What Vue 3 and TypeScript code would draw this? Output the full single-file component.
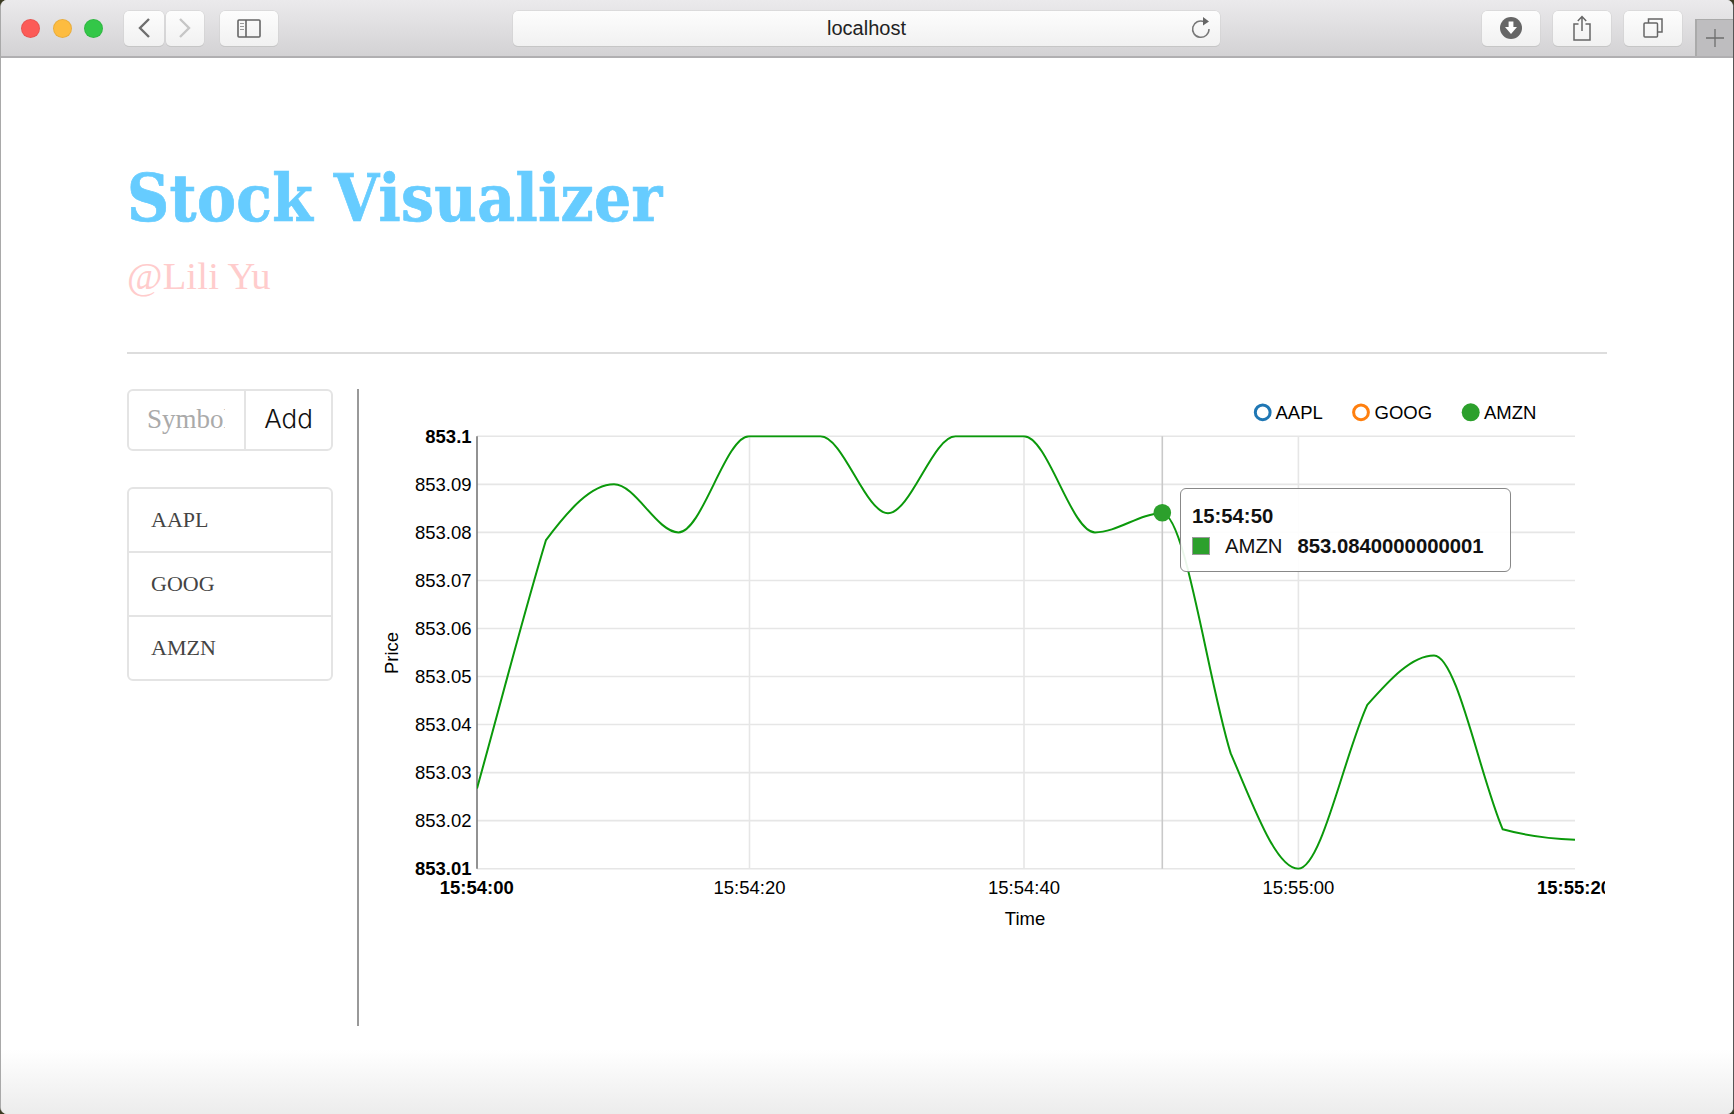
<script setup lang="ts">
import { computed } from 'vue';

const symbols = ['AAPL', 'GOOG', 'AMZN'];

// chart scale, measured from the page
const plotLeft = 477;
const plotRight = 1575;
const plotTop = 436.3;
const plotBottom = 868.7;
const yStep = (plotBottom - plotTop) / 9;

const priceToY = (p: number) => plotBottom - ((p - 853.01) / 0.01) * yStep;

const times = [477, 546, 614, 678.5, 749, 820.5, 888, 955.5, 1024, 1095, 1162.3, 1230.7, 1298.3, 1367.3, 1434, 1502.7, 1575];
const prices = [
	853.0267, 853.0784, 853.09, 853.08, 853.1, 853.1, 853.084, 853.1, 853.1,
	853.08, 853.084, 853.034, 853.01, 853.0441, 853.0544, 853.0182, 853.016,
];

// monotone curve, a knot keeps separate slopes on each side
const linePath = computed(() => {
	const ys = prices.map(priceToY);
	const n = ys.length;
	const d = ys.slice(1).map((y, i) => (y - ys[i]) / (times[i + 1] - times[i]));
	const slopeIn = ys.map(() => 0);
	const slopeOut = ys.map(() => 0);
	slopeOut[0] = d[0];
	slopeIn[n - 1] = d[n - 2] * 0.3;
	for (let i = 1; i < n - 1; i++) {
		const a = d[i - 1];
		const b = d[i];
		if (a * b <= 0) continue;
		const mean = (2 * a * b) / (a + b);
		if (Math.abs(a) > Math.abs(b)) {
			slopeIn[i] = a * 0.92;
			slopeOut[i] = mean;
		} else {
			slopeIn[i] = mean;
			slopeOut[i] = b * 0.92;
		}
	}
	let path = `M${times[0]},${ys[0]}`;
	for (let i = 1; i < n; i++) {
		const h = (times[i] - times[i - 1]) / 3;
		path += `C${times[i - 1] + h},${ys[i - 1] + slopeOut[i - 1] * h} ${times[i] - h},${ys[i] - slopeIn[i] * h} ${times[i]},${ys[i]}`;
	}
	return path;
});

const yTicks = ['853.1', '853.09', '853.08', '853.07', '853.06', '853.05', '853.04', '853.03', '853.02', '853.01'].map(
	(label, i) => ({
		label,
		y: plotTop + i * yStep,
		bold: i === 0 || i === 9,
	}),
);

const xTicks = [
	{ label: '15:54:00', x: 476.7, bold: true, grid: false },
	{ label: '15:54:20', x: 749.5, bold: false, grid: true },
	{ label: '15:54:40', x: 1024, bold: false, grid: true },
	{ label: '15:55:00', x: 1298.4, bold: false, grid: true },
	{ label: '15:55:20', x: 1574, bold: true, grid: false },
];
</script>

<template>
	<div class="window">
		<div class="toolbar">
			<span class="light red"></span>
			<span class="light yellow"></span>
			<span class="light green"></span>

			<button class="tb-btn back">
				<svg width="14" height="22" viewBox="0 0 14 22"><path d="M12 2 L3 11 L12 20" fill="none" stroke="#6e6e6e" stroke-width="2.4" /></svg>
			</button>
			<button class="tb-btn forward">
				<svg width="14" height="22" viewBox="0 0 14 22"><path d="M2 2 L11 11 L2 20" fill="none" stroke="#c6c6c6" stroke-width="2.4" /></svg>
			</button>
			<button class="tb-btn sidebar-btn">
				<svg width="24" height="19" viewBox="0 0 24 19">
					<rect x="1" y="1" width="22" height="17" rx="1" fill="none" stroke="#666" stroke-width="1.6" />
					<path d="M9 1 V18" stroke="#666" stroke-width="1.6" />
					<path d="M3 4.5 H7 M3 7.5 H7 M3 10.5 H7" stroke="#999" stroke-width="1.2" />
				</svg>
			</button>

			<div class="url">
				<span>localhost</span>
				<svg class="reload" width="22" height="24" viewBox="0 0 22 24">
					<path d="M14 5.6 A8.2 8.2 0 1 0 19 13" fill="none" stroke="#777" stroke-width="1.5" />
					<path d="M13 1 L19 5.6 L13 9.4 Z" fill="#666" />
				</svg>
			</div>

			<button class="tb-btn action download">
				<svg width="24" height="24" viewBox="0 0 24 24">
					<circle cx="12" cy="12" r="11" fill="#666" />
					<path d="M9.6 5.5 H14.4 V11 H18 L12 18 L6 11 H9.6 Z" fill="#fff" />
				</svg>
			</button>
			<button class="tb-btn action share">
				<svg width="20" height="26" viewBox="0 0 20 26">
					<path d="M6.5 9 H2 V25 H18 V9 H13.5" fill="none" stroke="#666" stroke-width="1.5" />
					<path d="M10 2 V16 M5.8 6 L10 1.6 L14.2 6" fill="none" stroke="#666" stroke-width="1.5" />
				</svg>
			</button>
			<button class="tb-btn action tabs">
				<svg width="20" height="20" viewBox="0 0 20 20">
					<rect x="1" y="5" width="13.5" height="14" rx="1" fill="none" stroke="#666" stroke-width="1.5" />
					<path d="M5.5 5 V1 H19 V14 H14.5" fill="none" stroke="#666" stroke-width="1.5" />
				</svg>
			</button>
			<div class="new-tab">
				<svg width="18" height="18" viewBox="0 0 18 18"><path d="M9 0 V18 M0 9 H18" stroke="#6e6e6e" stroke-width="1.3" /></svg>
			</div>
		</div>

		<div class="page">
			<header class="head">
				<h1>Stock Visualizer</h1>
				<p>@Lili Yu</p>
			</header>

			<div class="main">
				<aside class="side">
					<div class="add-group">
						<input type="text" placeholder="Symbol" />
						<button>Add</button>
					</div>
					<ul class="symbols">
						<li v-for="s in symbols" :key="s">{{ s }}</li>
					</ul>
				</aside>

				<div class="divider"></div>

				<div class="chart">
					<svg width="1246" height="637" viewBox="359 389 1246 637">
						<defs>
							<clipPath id="plot-clip">
								<rect :x="plotLeft" :y="plotTop - 1" :width="plotRight - plotLeft" :height="plotBottom - plotTop + 2" />
							</clipPath>
						</defs>

						<!-- grid -->
						<line v-for="t in yTicks" :key="t.label" :x1="plotLeft" :x2="plotRight" :y1="t.y" :y2="t.y" class="grid" />
						<template v-for="t in xTicks" :key="t.label">
							<line v-if="t.grid" :x1="t.x" :x2="t.x" :y1="plotTop" :y2="plotBottom" class="grid" />
						</template>
						<line x1="1162.3" x2="1162.3" :y1="plotTop" :y2="plotBottom" class="cross" />
						<line :x1="plotLeft" :x2="plotLeft" :y1="plotTop" :y2="plotBottom" class="axis" />

						<!-- tick labels -->
						<text
							v-for="t in yTicks"
							:key="t.label"
							x="471.6"
							:y="t.y + 6.3"
							text-anchor="end"
							class="tick"
							:class="{ bold: t.bold }"
						>{{ t.label }}</text>
						<text
							v-for="t in xTicks"
							:key="t.label"
							:x="t.x"
							y="894"
							text-anchor="middle"
							class="tick"
							:class="{ bold: t.bold }"
						>{{ t.label }}</text>
						<text x="1025" y="925" text-anchor="middle" class="tick">Time</text>
						<text transform="translate(398 653) rotate(-90)" text-anchor="middle" class="tick">Price</text>

						<!-- series -->
						<path :d="linePath" clip-path="url(#plot-clip)" class="series" />
						<circle cx="1162.3" cy="512.7" r="8.8" fill="#2ca02c" />

						<!-- legend -->
						<circle cx="1262.7" cy="412.3" r="7.4" class="ring" stroke="#1f77b4" />
						<text x="1275.5" y="419" class="tick">AAPL</text>
						<circle cx="1361" cy="412.3" r="7.4" class="ring" stroke="#ff7f0e" />
						<text x="1374.5" y="419" class="tick">GOOG</text>
						<circle cx="1470.7" cy="412.3" r="9" fill="#2ca02c" />
						<text x="1484" y="419" class="tick">AMZN</text>
					</svg>

					<div class="tooltip">
						<div class="tip-time">15:54:50</div>
						<div class="tip-row">
							<span class="tip-swatch"></span>
							<span class="tip-name">AMZN</span>
							<span class="tip-value">853.0840000000001</span>
						</div>
					</div>
				</div>
			</div>
		</div>
	</div>
</template>

<style>
html, body {
	margin: 0;
	background: #3b3a22;
}
</style>

<style scoped>
.window {
	position: relative;
	width: 1734px;
	height: 1114px;
	overflow: hidden;
	box-sizing: border-box;
	border-left: 1px solid #a9a9a9;
	border-right: 1px solid #555;
	border-radius: 7px;
	background: #fff;
}

/* the bottom fade of the safari window */
.window::after {
	content: '';
	position: absolute;
	left: 0;
	right: 0;
	bottom: 0;
	height: 64px;
	background: linear-gradient(rgba(238, 238, 238, 0), #ececec);
	pointer-events: none;
}

.toolbar {
	display: flex;
	align-items: center;
	box-sizing: border-box;
	height: 58px;
	padding-left: 20px;
	background: linear-gradient(#ebeaec, #d3d2d4);
	border-bottom: 2px solid #b0afb1;
}

.light {
	flex: none;
	width: 19px;
	height: 19px;
	margin-right: 12.5px;
	box-sizing: border-box;
	border-radius: 50%;
	border: 1px solid rgba(0, 0, 0, 0.08);
}
.red { background: #fc5b57; }
.yellow { background: #fdbc40; }
.green { background: #33c748; }

.tb-btn {
	flex: none;
	display: flex;
	align-items: center;
	justify-content: center;
	height: 35px;
	padding: 0;
	border: none;
	border-radius: 5px;
	background: linear-gradient(#fdfdfd, #f1f1f1);
	box-shadow: 0 0 0 0.5px #cfcfcf, 0 1px 0 #bdbdbd;
}

.back { width: 40px; margin-left: 8.5px; }
.forward { width: 38px; margin-left: 2px; }
.sidebar-btn { width: 58px; margin-left: 16px; }

.url {
	flex: none;
	position: relative;
	display: flex;
	align-items: center;
	justify-content: center;
	width: 707px;
	height: 35px;
	margin-left: 235px;
	border-radius: 5px;
	background: linear-gradient(#fdfdfd, #f1f1f1);
	box-shadow: 0 0 0 0.5px #cfcfcf, 0 1px 0 #bdbdbd;
	font-family: 'Liberation Sans', Arial, sans-serif;
	font-size: 20px;
	color: #222;
}

.reload {
	position: absolute;
	right: 8px;
	top: 5px;
}

.action { width: 58px; margin-left: 13px; }
.download { margin-left: 262px; }

.new-tab {
	flex: none;
	align-self: flex-end;
	display: flex;
	align-items: center;
	justify-content: center;
	box-sizing: border-box;
	width: 40px;
	height: 37px;
	margin-left: 13px;
	padding-right: 2px;
	background: #bebdbf;
	border-top: 1px solid #aaa;
	border-left: 2px solid #aaa;
}

.page {
	width: 1480px;
	margin-left: 126px;
}

.head {
	padding-top: 102px;
	height: 192px;
	border-bottom: 2px solid #ddd;
}

h1 {
	margin: 0;
	font-family: 'DejaVu Serif', Georgia, serif;
	font-stretch: condensed;
	font-weight: 700;
	font-size: 65px;
	line-height: 76px;
	letter-spacing: 0.35px;
	-webkit-text-stroke: 0.7px #66ccff;
	color: #66ccff;
}

.head p {
	margin: 18px 0 0;
	font-family: 'Liberation Serif', Georgia, serif;
	font-size: 38.5px;
	line-height: 44px;
	letter-spacing: 0.2px;
	color: #ffcccc;
}

.main {
	display: flex;
	height: 637px;
	margin-top: 35px;
}

.side {
	flex: none;
	width: 206px;
}

.add-group {
	display: flex;
	box-sizing: border-box;
	height: 62px;
	border: 2px solid #e4e4e4;
	border-radius: 6px;
}

.add-group input {
	flex: none;
	box-sizing: border-box;
	width: 117px;
	padding: 0 19px 2px 18px;
	border: none;
	border-right: 2px solid #e4e4e4;
	outline: none;
	background: transparent;
	font-family: 'Liberation Serif', Georgia, serif;
	font-size: 27px;
}
.add-group input::placeholder {
	color: #aaa;
	opacity: 1;
}

.add-group button {
	flex: 1;
	padding: 0 0 3px;
	border: none;
	background: transparent;
	font-family: Inter, Lato, sans-serif;
	font-weight: 300;
	font-size: 26px;
	color: #111;
}

.symbols {
	margin: 36px 0 0;
	padding: 0;
	list-style: none;
	border: 2px solid #e4e4e4;
	border-radius: 6px;
}

.symbols li {
	height: 62px;
	padding-left: 22px;
	font-family: 'Liberation Serif', Georgia, serif;
	font-size: 22px;
	line-height: 62px;
	color: #444;
}
.symbols li + li {
	border-top: 2px solid #e4e4e4;
}

.divider {
	flex: none;
	width: 2px;
	margin-left: 24px;
	background: #999;
}

.chart {
	position: relative;
	flex: none;
	width: 1246px;
}

.chart svg {
	display: block;
}

.tick {
	font-family: 'Liberation Sans', Arial, sans-serif;
	font-size: 18.5px;
	fill: #000;
}
.tick.bold {
	font-weight: 700;
}

.grid {
	stroke: #e6e6e6;
	stroke-width: 1.6;
}
.cross {
	stroke: #c9c9c9;
	stroke-width: 1.6;
}
.axis {
	stroke: #777;
	stroke-width: 1.6;
}
.series {
	fill: none;
	stroke: #0b990b;
	stroke-width: 2;
}
.ring {
	fill: #fff;
	stroke-width: 3;
}

.tooltip {
	position: absolute;
	left: 821px;
	top: 99px;
	box-sizing: border-box;
	width: 331px;
	height: 84px;
	padding: 12px 11px 0;
	background: rgba(255, 255, 255, 0.92);
	border: 1.5px solid #888;
	border-radius: 6px;
	font-family: 'Liberation Sans', Arial, sans-serif;
	font-size: 20.3px;
	line-height: 30px;
	color: #111;
}

.tip-time {
	font-weight: 700;
}

.tip-row {
	display: flex;
	align-items: center;
}

.tip-swatch {
	flex: none;
	box-sizing: border-box;
	width: 18px;
	height: 18px;
	background: #2ca02c;
	border: 1.5px solid #999;
}

.tip-name {
	margin-left: 15px;
}

.tip-value {
	margin-left: 15px;
	font-weight: 700;
}
</style>
